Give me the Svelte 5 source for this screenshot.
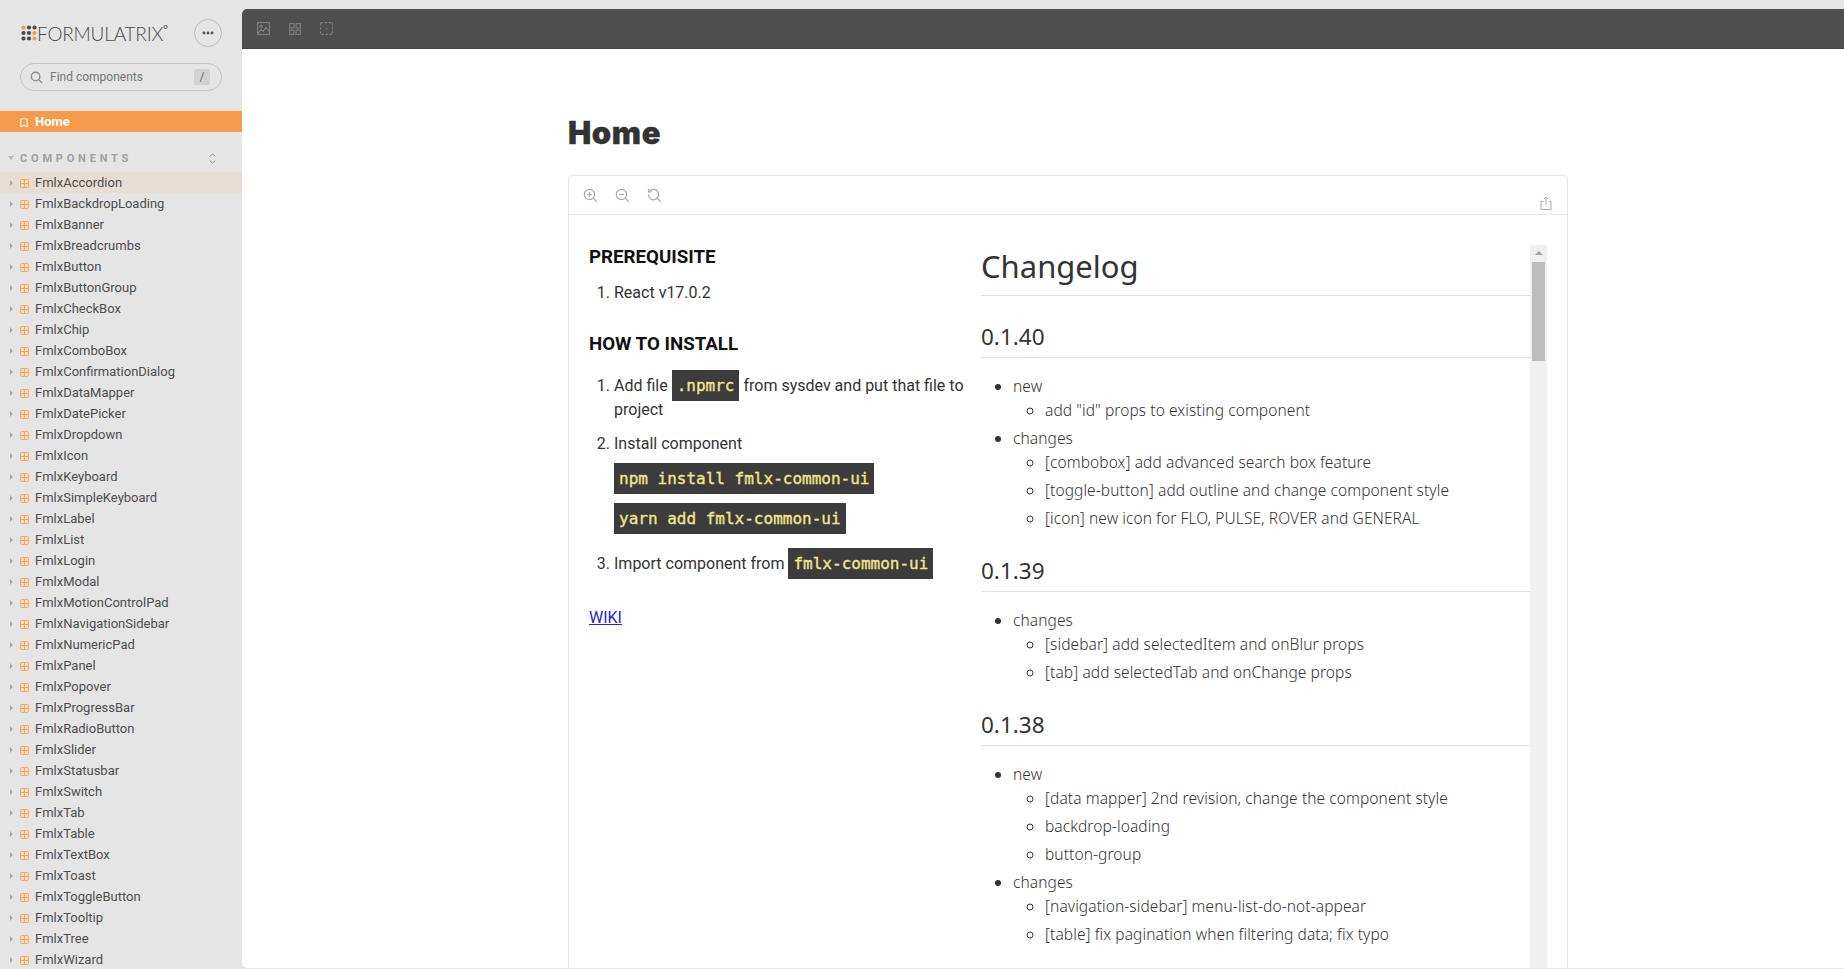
<script lang="ts">
  const components = [
    'FmlxAccordion', 'FmlxBackdropLoading', 'FmlxBanner', 'FmlxBreadcrumbs', 'FmlxButton',
    'FmlxButtonGroup', 'FmlxCheckBox', 'FmlxChip', 'FmlxComboBox', 'FmlxConfirmationDialog',
    'FmlxDataMapper', 'FmlxDatePicker', 'FmlxDropdown', 'FmlxIcon', 'FmlxKeyboard',
    'FmlxSimpleKeyboard', 'FmlxLabel', 'FmlxList', 'FmlxLogin', 'FmlxModal',
    'FmlxMotionControlPad', 'FmlxNavigationSidebar', 'FmlxNumericPad', 'FmlxPanel', 'FmlxPopover',
    'FmlxProgressBar', 'FmlxRadioButton', 'FmlxSlider', 'FmlxStatusbar', 'FmlxSwitch',
    'FmlxTab', 'FmlxTable', 'FmlxTextBox', 'FmlxToast', 'FmlxToggleButton',
    'FmlxTooltip', 'FmlxTree', 'FmlxWizard'
  ];

  const changelog = [
    {
      version: '0.1.40',
      groups: [
        { name: 'new', items: ['add "id" props to existing component'] },
        {
          name: 'changes',
          items: [
            '[combobox] add advanced search box feature',
            '[toggle-button] add outline and change component style',
            '[icon] new icon for FLO, PULSE, ROVER and GENERAL'
          ]
        }
      ]
    },
    {
      version: '0.1.39',
      groups: [
        {
          name: 'changes',
          items: ['[sidebar] add selectedItem and onBlur props', '[tab] add selectedTab and onChange props']
        }
      ]
    },
    {
      version: '0.1.38',
      groups: [
        {
          name: 'new',
          items: ['[data mapper] 2nd revision, change the component style', 'backdrop-loading', 'button-group']
        },
        {
          name: 'changes',
          items: ['[navigation-sidebar] menu-list-do-not-appear', '[table] fix pagination when filtering data; fix typo']
        }
      ]
    }
  ];

  // logo dot grid, orange where the mark has its accent dots
  const dots = [
    '#f59c4c', '#4a4a4a', '#4a4a4a',
    '#4a4a4a', '#4a4a4a', '#f59c4c',
    '#4a4a4a', '#4a4a4a', '#f59c4c'
  ];
</script>

<div class="shell">
  <aside class="sidebar">
    <div class="brand">
      <div class="logo">
        <svg class="mark" width="16" height="16" viewBox="0 0 16 16">
          {#each dots as fill, i}
            <circle cx={2.5 + (i % 3) * 5.5} cy={2.5 + Math.floor(i / 3) * 5.5} r="2.1" {fill} />
          {/each}
        </svg>
        <span class="wordmark">FORMULATRIX</span><span class="reg">°</span>
      </div>
      <button class="more" aria-label="More">
        <svg width="12" height="4" viewBox="0 0 12 4"><circle cx="2" cy="2" r="1.4" /><circle cx="6" cy="2" r="1.4" /><circle cx="10" cy="2" r="1.4" /></svg>
      </button>
    </div>

    <div class="search">
      <svg width="13" height="13" viewBox="0 0 14 14" fill="none" stroke="#8f8f8f" stroke-width="1.5"><circle cx="6" cy="6" r="4.6" /><path d="M9.400 9.400 13 13" /></svg>
      <span class="placeholder">Find components</span>
      <kbd>/</kbd>
    </div>

    <div class="home">
      <svg width="8" height="10" viewBox="0 0 8 10" fill="none" stroke="#fff" stroke-width="1"><path d="M.8.8h6.400v8.200L4 7 .8 9z" /></svg>
      <span>Home</span>
    </div>

    <div class="section">
      <span class="caret-down"></span>
      <span class="section-title">COMPONENTS</span>
      <svg width="7" height="11" viewBox="0 0 7 11" fill="none" stroke="#8f8f8f" stroke-width="1"><path d="M.8 3.500 3.500.8l2.700 2.700M.8 7.500l2.700 2.700 2.700-2.700" /></svg>
    </div>

    <ul class="tree">
      {#each components as name, i}
        <li class:selected={i === 0}>
          <span class="caret-right"></span>
          <svg class="comp" width="9" height="9" viewBox="0 0 10 10"><rect x=".5" y=".5" width="9" height="9" rx="1.5" fill="#fbd9b8" stroke="#f4a45c" /><path d="M5 1v8M1 5h8" stroke="#f4a45c" /></svg>
          <span>{name}</span>
        </li>
      {/each}
    </ul>
  </aside>

  <main class="main">
    <div class="topbar">
      <svg width="13" height="13" viewBox="0 0 14 14" fill="none" stroke="#7f7f7f" stroke-width="1.2"><rect x=".6" y=".6" width="12.800" height="12.800" /><circle cx="4.500" cy="4.500" r="1.300" /><path d="M1 12l3.500-4 2 2L9.500 6 13 10" /></svg>
      <svg width="12" height="12" viewBox="0 0 12 12" fill="none" stroke="#7f7f7f" stroke-width="1.1"><rect x=".6" y=".6" width="4.300" height="4.300" /><rect x="7.100" y=".6" width="4.300" height="4.300" /><rect x=".6" y="7.100" width="4.300" height="4.300" /><rect x="7.100" y="7.100" width="4.300" height="4.300" /></svg>
      <svg width="13" height="13" viewBox="0 0 13 13" fill="none" stroke="#7f7f7f" stroke-width="1.1"><rect x=".6" y=".6" width="11.800" height="11.800" stroke-dasharray="2.600 1.400" /><circle cx="6.500" cy="6.500" r=".8" fill="#7f7f7f" stroke="none" /></svg>
    </div>

    <div class="doc">
      <h1>Home</h1>
      <div class="card">
        <div class="card-toolbar">
          <div class="zoom-tools">
            <svg width="15" height="15" viewBox="0 0 15 15" fill="none" stroke="#a9a9a9" stroke-width="1.200"><circle cx="6.500" cy="6.500" r="5.200" /><path d="M10.300 10.300 14 14M4 6.500h5M6.500 4v5" /></svg>
            <svg width="15" height="15" viewBox="0 0 15 15" fill="none" stroke="#a9a9a9" stroke-width="1.200"><circle cx="6.500" cy="6.500" r="5.200" /><path d="M10.300 10.300 14 14M4 6.500h5" /></svg>
            <svg width="15" height="15" viewBox="0 0 15 15" fill="none" stroke="#a9a9a9" stroke-width="1.200"><path d="M2.300 3.500A5.200 5.200 0 1 1 1.300 6.500M10.300 10.300 14 14M1.500 1v3h3" /></svg>
          </div>
          <svg class="share" width="12" height="14" viewBox="0 0 12 14" fill="none" stroke="#a9a9a9" stroke-width="1"><path d="M3.500 5.500H1v8h10v-8H8.500M6 9V1M3.800 3 6 1l2.200 2" /></svg>
        </div>

        <div class="card-body">
          <section class="readme">
            <h3>PREREQUISITE</h3>
            <ol class="prereq">
              <li>React v17.0.2</li>
            </ol>
            <h3>HOW TO INSTALL</h3>
            <ol class="install">
              <li>Add file <code>.npmrc</code> from sysdev and put that file to project</li>
              <li>
                Install component
                <div class="cmd"><code>npm install fmlx-common-ui</code></div>
                <div class="cmd"><code>yarn add fmlx-common-ui</code></div>
              </li>
              <li>Import component from <code>fmlx-common-ui</code></li>
            </ol>
            <a href="#wiki">WIKI</a>
          </section>

          <section class="changelog">
            <div class="log">
              <h2 class="title">Changelog</h2>
              {#each changelog as release}
                <h3>{release.version}</h3>
                <ul>
                  {#each release.groups as group}
                    <li>
                      {group.name}
                      <ul>
                        {#each group.items as item}
                          <li>{item}</li>
                        {/each}
                      </ul>
                    </li>
                  {/each}
                </ul>
              {/each}
            </div>
            <div class="scrollbar">
              <span class="arrow"></span>
              <span class="thumb"></span>
            </div>
          </section>
        </div>
      </div>
    </div>
  </main>
</div>

<style>
  :global(body) {
    margin: 0;
    background: #e5e5e5;
    overflow: hidden;
  }

  .shell {
    display: flex;
    height: 969px;
    overflow: hidden;
    font-family: Roboto, sans-serif;
    background: #e5e5e5;
  }

  .sidebar {
    width: 242px;
    flex: none;
    padding-top: 19px;
    box-sizing: border-box;
  }

  .brand {
    display: flex;
    align-items: center;
    justify-content: space-between;
    padding: 0 20px 0 21px;
    height: 28px;
  }

  .logo {
    display: flex;
    align-items: center;
  }

  .wordmark {
    font-family: Lato, sans-serif;
    font-weight: 300;
    font-size: 19px;
    color: #4a4a4a;
    letter-spacing: -0.2px;
  }

  .reg {
    font-family: Lato, sans-serif;
    font-size: 12px;
    color: #4a4a4a;
    align-self: flex-start;
  }

  .more {
    width: 28px;
    height: 28px;
    padding: 0;
    border: 1px solid #bdbdbd;
    border-radius: 50%;
    background: none;
    display: flex;
    align-items: center;
    justify-content: center;
    fill: #555;
  }

  .search {
    margin: 16px 20px 0;
    height: 28px;
    box-sizing: border-box;
    border: 1px solid #c4c4c4;
    border-radius: 15px;
    display: flex;
    align-items: center;
    padding: 0 11px 0 9px;
    gap: 7px;
  }

  .placeholder {
    flex: 1;
    font-size: 12px;
    color: #757575;
  }

  kbd {
    width: 16px;
    height: 16px;
    background: #d2d2d2;
    border-radius: 2px;
    color: #6d6d6d;
    font: 12px/16px Roboto, sans-serif;
    text-align: center;
  }

  .home {
    margin-top: 20px;
    height: 21px;
    background: #f59c4c;
    color: #fff;
    font-size: 13px;
    font-weight: 700;
    display: flex;
    align-items: center;
    padding-left: 20px;
    gap: 7px;
  }

  .home svg {
    margin-top: 2px;
  }

  .section {
    margin-top: 16px;
    height: 20px;
    display: flex;
    align-items: center;
    padding: 0 26px 0 8px;
    gap: 6px;
  }

  .caret-down {
    border: 3px solid transparent;
    border-top: 4px solid #b8b8b8;
    border-bottom: 0;
  }

  .section-title {
    flex: 1;
    font-size: 11px;
    font-weight: 700;
    letter-spacing: 3.8px;
    color: #a0a0a0;
  }

  .tree {
    list-style: none;
    margin: 4px 0 0;
    padding: 0;
  }

  .tree li {
    height: 21px;
    display: flex;
    align-items: center;
    padding-left: 10px;
    font-size: 13px;
    color: #4d4d4d;
  }

  .tree li.selected {
    background: #e8ddd2;
  }

  .caret-right {
    border: 3px solid transparent;
    border-left: 3px solid #aaa;
    border-right: 0;
    margin-right: 7px;
  }

  .comp {
    margin-right: 6px;
    margin-top: 1px;
    flex: none;
  }

  .main {
    flex: 1;
    margin: 9px 0 0;
    background: #fff;
    border-radius: 5px 0 0 5px;
    overflow: hidden;
    min-width: 0;
    height: 959px;
  }

  .topbar {
    height: 40px;
    background: #4f4f4f;
    display: flex;
    align-items: center;
    gap: 19px;
    padding-left: 15px;
    box-sizing: border-box;
    border-bottom: 1px solid #444;
  }

  .doc {
    width: 1000px;
    margin-left: 326px;
    padding-top: 59px;
  }

  h1 {
    margin: 0;
    font-family: Inter, sans-serif;
    font-weight: 900;
    font-size: 31px;
    letter-spacing: 0.6px;
    -webkit-text-stroke: 0.3px #333;
    line-height: 50px;
    color: #333;
  }

  .card {
    margin-top: 17px;
    border: 1px solid #e6e6e6;
    border-radius: 4px;
    background: #fff;
  }

  .card-toolbar {
    height: 38px;
    display: flex;
    align-items: center;
    justify-content: space-between;
    padding: 0 15px 0 14px;
    border-bottom: 1px solid #e6e6e6;
  }

  .zoom-tools {
    display: flex;
    gap: 17px;
  }

  .share {
    margin-top: 16px;
  }

  .card-body {
    display: flex;
    padding: 20px 20px 0;
  }

  .readme {
    width: 392px;
    flex: none;
    font-size: 16px;
    line-height: 24px;
    color: #333;
  }

  .readme h3 {
    margin: 8px 0 0;
    font-size: 18.72px;
    font-weight: 700;
    color: #111;
    line-height: 29px;
  }

  .readme ol {
    padding-left: 25px;
  }

  .prereq {
    margin: 9px 0 25px;
  }

  .install {
    margin: 15px 0 30px;
  }

  .readme li {
    margin-bottom: 10px;
  }

  .readme code {
    background: #3c3c3c;
    color: #f0e68c;
    font-family: "DejaVu Sans Mono", monospace;
    font-size: 16px;
    -webkit-text-stroke: 0.35px #f0e68c;
    padding: 6px 5px;
  }

  .cmd {
    margin: 8px 0;
    height: 30px;
    line-height: 30px;
  }

  .cmd + .cmd {
    margin-top: 10px;
    margin-bottom: 18px;
  }

  .readme a {
    color: #2222dd;
  }

  .changelog {
    flex: 1;
    display: flex;
    min-width: 0;
    margin-top: 10px;
  }

  .log {
    flex: 1;
    min-width: 0;
    font-family: "Noto Sans", sans-serif;
    font-weight: 300;
    font-size: 15.5px;
    letter-spacing: 0.09px;
    line-height: 24px;
    color: #333;
  }

  .log .title {
    margin: 0;
    font-size: 31px;
    font-weight: 400;
    letter-spacing: 0;
    line-height: 42px;
    color: #333;
    border-bottom: 1px solid #e0e0e0;
    padding-bottom: 8px;
  }

  .log h3 {
    margin: 23px 0 16px;
    font-size: 22.5px;
    font-weight: 400;
    letter-spacing: 0;
    line-height: 36px;
    color: #333;
    border-bottom: 1px solid #e0e0e0;
    padding-bottom: 2px;
  }

  .log ul {
    margin: 0;
    padding-left: 32px;
  }

  .log li + li {
    margin-top: 4px;
  }

  .scrollbar {
    width: 17px;
    flex: none;
    background: #f0f0f0;
    display: flex;
    flex-direction: column;
    align-items: center;
    height: 760px;
  }

  .arrow {
    border: 4px solid transparent;
    border-top: 0;
    border-bottom: 4px solid #a3a3a3;
    margin: 6px 0 7px;
  }

  .thumb {
    width: 13px;
    height: 99px;
    background: #bdbdbd;
  }
</style>
